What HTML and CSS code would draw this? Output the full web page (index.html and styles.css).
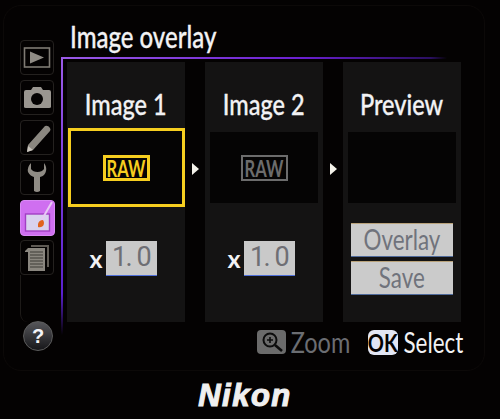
FILE: index.html
```html
<!DOCTYPE html>
<html lang="en">
<head>
  <meta charset="UTF-8">
  <meta name="viewport" content="width=device-width, initial-scale=1.0">
  <title>Image overlay</title>
  <link rel="stylesheet" href="styles.css">
</head>
<body>
  <div class="lcd">
    <!-- menu tabs -->
    <nav class="tabs">
      <div class="tab">
        <svg width="34" height="35" viewBox="0 0 34 35"><rect x="4.5" y="8" width="25" height="19" fill="none" stroke="#7f7b74" stroke-width="1.6"/><path d="M10 11.5 L24 17.5 L10 23.5 Z" fill="#8f8b84"/></svg>
      </div>
      <div class="tab">
        <svg width="34" height="35" viewBox="0 0 34 35"><path d="M4 12 Q4 10 6 10 H11 L13 7 H21 L23 10 H29 Q31 10 31 12 V27 Q31 28 29 28 H6 Q4 28 4 27 Z" fill="#9a9690"/><circle cx="17" cy="19" r="6" fill="#050303"/></svg>
      </div>
      <div class="tab">
        <svg width="34" height="35" viewBox="0 0 34 35"><path d="M8 25 L25 6 Q28 5 30 8 Q31 10 30 11 L13 30 L7 32 Z" fill="#8b8780"/><path d="M8 26 L7 32 L13 30 Z" fill="#c9c5bd"/></svg>
      </div>
      <div class="tab">
        <svg width="34" height="35" viewBox="0 0 34 35"><path d="M11 3 Q7 7 8 12 Q10 16 14 17 V31 Q17 33 20 31 V17 Q25 16 26 11 Q27 7 24 3 V9 Q22 12 17.5 12 Q13 12 11 9 Z" fill="#8f8b84"/></svg>
      </div>
      <div class="tab tab-active">
        <svg width="35" height="36" viewBox="0 0 35 36"><rect x="5.5" y="14" width="24" height="17" fill="#d9d2ee" stroke="#a23fc4" stroke-width="1.4"/><path d="M21 21 L32 2" stroke="#e8c8f4" stroke-width="2"/><path d="M18 24 Q19 20 23 20 Q25 23 23 26 Q20 28 18 27 Z" fill="#e0641e"/></svg>
      </div>
      <div class="tab">
        <svg width="34" height="35" viewBox="0 0 34 35"><path d="M11 5 H29 V27 H27 V7 H11 Z" fill="#5e5a54"/><path d="M5 11 L8 8 H25 V31 H8 V12 H5 Z" fill="#8a867f"/><path d="M10 12 H23 M10 15 H23 M10 18 H23 M10 21 H23 M10 24 H23 M10 27 H23" stroke="#3c3a36" stroke-width="1"/></svg>
      </div>
      <div class="tab-rail"></div>
      <div class="help">?</div>
    </nav>

    <main class="content">
      <h1 class="title"><span class="narrow">Image overlay</span></h1>
      <section class="panel">
        <div class="col">
          <h2 class="col-head"><span class="narrow">Image 1</span></h2>
          <div class="slot slot-selected"><span class="raw raw-on"><span class="raw-text">RAW</span></span></div>
          <div class="gain"><span class="gain-x">x</span><span class="gain-val">1. 0</span></div>
          <span class="arrow"></span>
        </div>
        <div class="col">
          <h2 class="col-head"><span class="narrow">Image 2</span></h2>
          <div class="slot"><span class="raw"><span class="raw-text">RAW</span></span></div>
          <div class="gain"><span class="gain-x">x</span><span class="gain-val">1. 0</span></div>
          <span class="arrow"></span>
        </div>
        <div class="col">
          <h2 class="col-head"><span class="narrow">Preview</span></h2>
          <div class="slot"></div>
          <div class="actions">
            <div class="action"><span class="narrow">Overlay</span></div>
            <div class="action"><span class="narrow">Save</span></div>
          </div>
        </div>
      </section>
      <footer class="hints">
        <span class="hint hint-dim">
          <span class="key-zoom">
            <svg width="29" height="24" viewBox="0 0 29 24"><circle cx="13" cy="10" r="6.5" fill="none" stroke="#0c0c0c" stroke-width="2"/><path d="M10 10 H16 M13 7 V13" stroke="#0c0c0c" stroke-width="1.6"/><path d="M18 15 L25 21" stroke="#0c0c0c" stroke-width="2.6"/></svg>
          </span>
          <span class="hint-label hint-label-zoom"><span class="narrow">Zoom</span></span>
        </span>
        <span class="hint">
          <span class="key-ok"><span class="key-ok-text">OK</span></span>
          <span class="hint-label hint-label-select"><span class="narrow">Select</span></span>
        </span>
      </footer>
    </main>
  </div>
  <div class="brand">Nikon</div>
</body>
</html>
```

FILE: styles.css
```css
/* page */
html, body {
  margin: 0;
  padding: 0;
}
body {
  width: 500px;
  height: 419px;
  overflow: hidden;
  background-color: #040202;
  font-family: Lato, "Open Sans", sans-serif;
  color: #f2f2f4;
}

/* camera font is tall and condensed */
.narrow {
  display: inline-block;
  transform: scaleX(0.84);
}

/* screen area */
.lcd {
  box-sizing: border-box;
  width: 482px;
  height: 366px;
  margin: 5px 0 0 3px;
  padding: 15px 0 0 16px;
  display: flex;
  gap: 7px;
  border: 1px solid #0c0908;
  border-radius: 18px;
}

/* left tabs */
.tabs {
  width: 34px;
  display: flex;
  flex-direction: column;
  gap: 5px;
  padding-top: 19px;
}
.tab {
  box-sizing: border-box;
  width: 34px;
  height: 35px;
  border: 1px solid #24211f;
  border-radius: 4px;
  overflow: hidden;
}
.tab svg {
  display: block;
  margin: -1px;
}
.tab-active {
  width: 35px;
  height: 36px;
  margin-bottom: -1px;
  background-color: #cf6ff0;
  border-color: #d98af5;
}
.tab-rail {
  height: 47px;
  margin-top: -5px;
  border-left: 1px solid #1d1a18;
  border-radius: 0 0 0 8px;
}
.help {
  width: 28px;
  height: 28px;
  margin: -6px 0 0 3px;
  border-radius: 50%;
  border: 1px solid #5c5c5c;
  background: linear-gradient(#56565a, #17171a);
  font: bold 20px/28px "Liberation Sans", sans-serif;
  color: #f4f4f8;
  text-align: center;
}

/* main content */
.content {
  width: 402px;
}
.title {
  margin: 0;
  height: 36px;
  font-size: 30px;
  font-weight: 500;
  line-height: 30px;
  padding-left: 9px;
  -webkit-text-stroke: 0.3px #f2f2f4;
}
.title .narrow {
  transform: scaleX(0.8);
  transform-origin: left;
}
.panel {
  display: flex;
  gap: 20px;
  box-sizing: border-box;
  height: 278px;
  padding: 5px 0 12px 6px;
  background:
    linear-gradient(90deg, #9b5be8, #6a1fd0 60%, #2a0f60 92%, transparent 96%) top left / 100% 2px no-repeat,
    linear-gradient(180deg, #9b5be8, #5a20d0 85%, transparent) top left / 2px 100% no-repeat;
}
.col {
  position: relative;
  box-sizing: border-box;
  width: 118px;
  height: 260px;
  background-color: #141313;
  display: flex;
  flex-direction: column;
  align-items: center;
}
.col-head {
  margin: 0;
  height: 66px;
  padding-top: 25px;
  box-sizing: border-box;
  font-size: 28px;
  font-weight: 500;
  line-height: 34px;
  -webkit-text-stroke: 0.3px #f2f2f4;
}

/* image slots */
.slot {
  box-sizing: border-box;
  width: 108px;
  height: 71px;
  margin: 4px 0;
  background-color: #050404;
  display: flex;
  align-items: center;
  justify-content: center;
}
.slot-selected {
  width: 117px;
  height: 79px;
  margin: 0;
  border: 3px solid #f6ce1f;
}
.raw {
  box-sizing: border-box;
  width: 47px;
  height: 26px;
  border: 2px solid #6c6c6c;
  color: #6c6c6c;
  font: bold 23px/22px Lato, sans-serif;
  display: flex;
  justify-content: center;
}
.raw-text {
  display: inline-block;
  transform: scaleX(0.72);
}
.raw-on {
  border: 3px solid #f6ce1f;
  color: #f6ce1f;
  line-height: 20px;
}
.arrow {
  position: absolute;
  top: 101px;
  right: -14px;
  border-left: 7px solid #f4f2ea;
  border-top: 6px solid transparent;
  border-bottom: 6px solid transparent;
}

/* multiplier */
.gain {
  display: flex;
  align-items: center;
  gap: 3px;
  margin-top: 34px;
  margin-left: -6px;
}
.gain-x {
  font: bold 25px/35px Lato, sans-serif;
}
.gain-val {
  box-sizing: border-box;
  width: 51px;
  height: 35px;
  background-color: #c9c9c9;
  border-bottom: 1px solid #4f6fd8;
  color: #6e6e74;
  font: 27px/33px Roboto, sans-serif;
  text-align: center;
  letter-spacing: -1.5px;
}

/* preview buttons */
.actions {
  display: flex;
  flex-direction: column;
  gap: 4px;
  margin-top: 16px;
}
.action {
  box-sizing: border-box;
  width: 102px;
  height: 34px;
  background-color: #cbcbcb;
  border-top: 1px solid #b9a27a;
  border-bottom: 1px solid #4f6a9a;
  color: #70737c;
  font-size: 28px;
  line-height: 30px;
  text-align: center;
}
.action .narrow {
  transform: scaleX(0.8);
}

/* bottom hints */
.hints {
  display: flex;
  justify-content: flex-end;
  align-items: center;
  gap: 18px;
  height: 26px;
  margin-top: -6px;
  width: 402px;
}
.hint {
  display: flex;
  align-items: center;
  gap: 5px;
  font-size: 28px;
  line-height: 26px;
}
.hint-dim {
  color: #6b6d72;
}
.hint-label {
  display: flex;
  justify-content: center;
}
.hint-label-zoom {
  width: 59px;
}
.hint-label-select {
  width: 60px;
}
.hint-label-select .narrow {
  transform: scaleX(0.8);
}
.key-zoom {
  width: 29px;
  height: 24px;
  border-radius: 4px;
  background-color: #6b6b6b;
}
.key-zoom svg {
  display: block;
}
.key-ok {
  width: 30px;
  height: 25px;
  border-radius: 6px;
  background-color: #e2e6f4;
  color: #040202;
  font: bold 25px/25px Lato, sans-serif;
  display: flex;
  justify-content: center;
}
.key-ok-text {
  display: inline-block;
  transform: scaleX(0.8);
}

/* camera logo */
.brand {
  margin-top: 8px;
  text-align: center;
  width: 490px;
  font: italic bold 31px/34px "Liberation Sans", sans-serif;
  letter-spacing: 1.5px;
  color: #f0f0f0;
  -webkit-text-stroke: 1.1px #f0f0f0;
}
```
